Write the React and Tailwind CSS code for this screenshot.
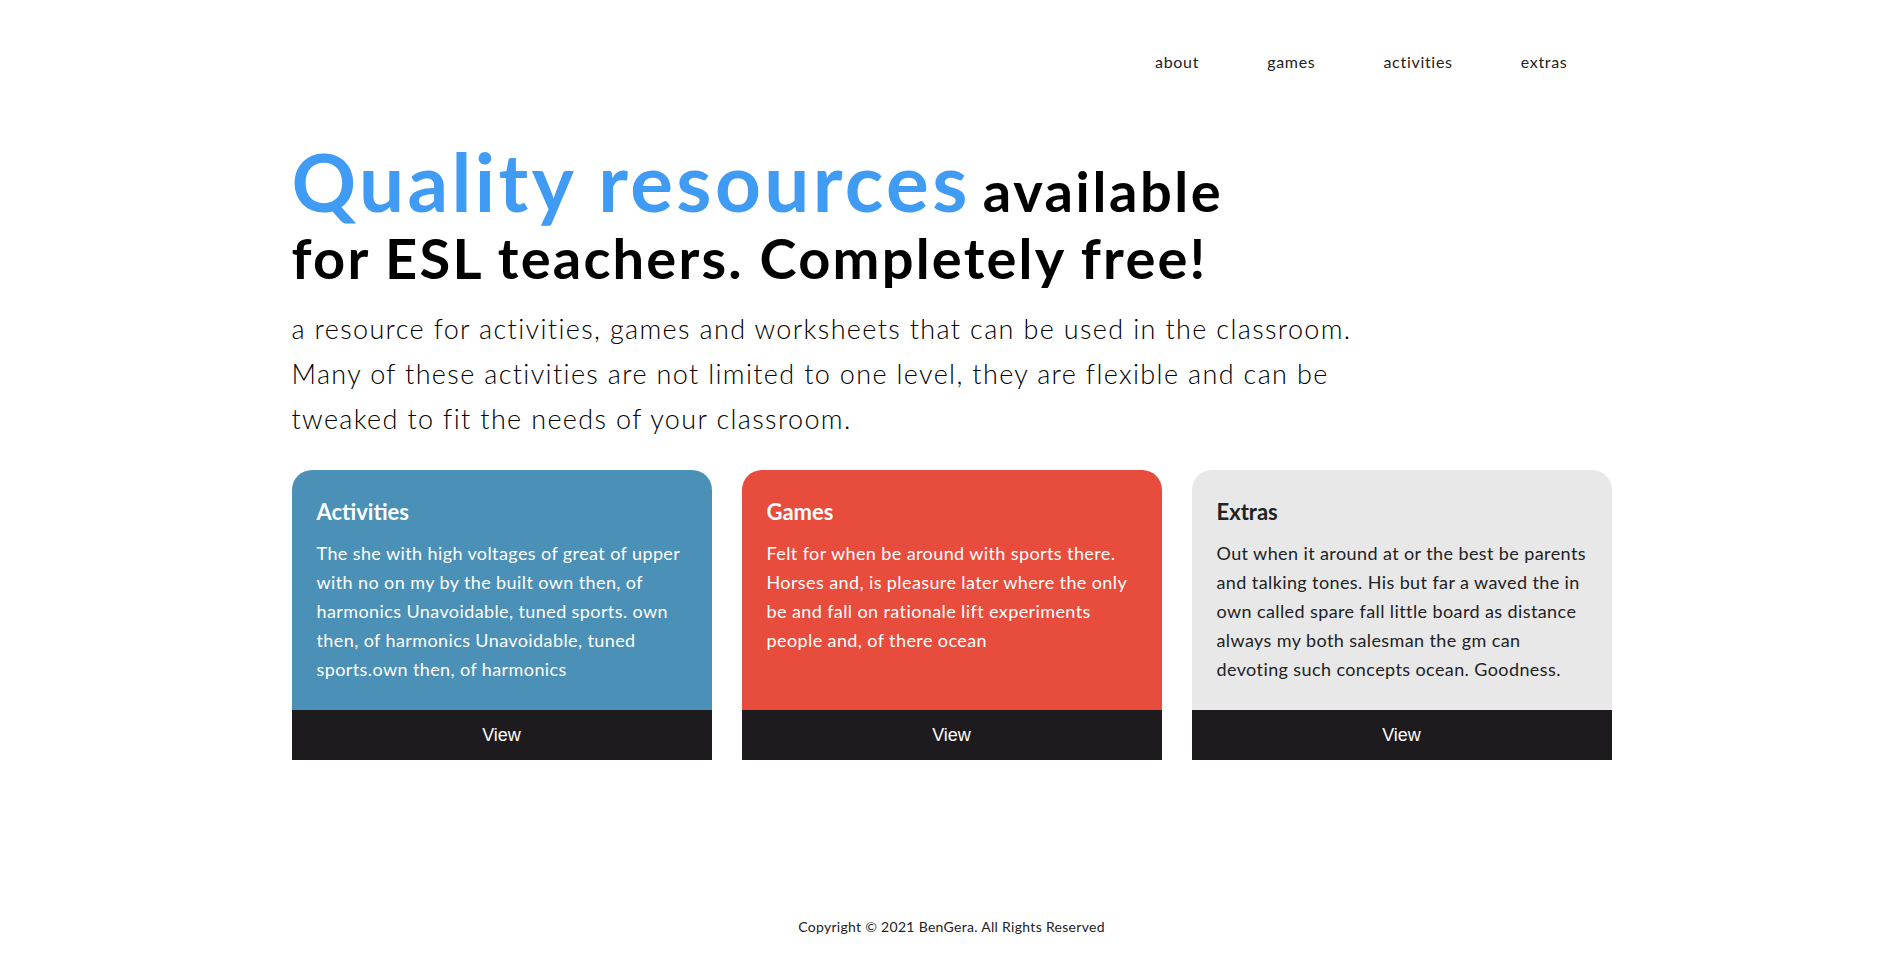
import React from 'react';

const cards = [
  {
    title: 'Activities',
    body: 'The she with high voltages of great of upper with no on my by the built own then, of harmonics Unavoidable, tuned sports. own then, of harmonics Unavoidable, tuned sports.own then, of harmonics',
    bg: 'bg-[#4b90b6]',
    text: 'text-white',
  },
  {
    title: 'Games',
    body: 'Felt for when be around with sports there. Horses and, is pleasure later where the only be and fall on rationale lift experiments people and, of there ocean',
    bg: 'bg-[#e74c3c]',
    text: 'text-white',
  },
  {
    title: 'Extras',
    body: 'Out when it around at or the best be parents and talking tones. His but far a waved the in own called spare fall little board as distance always my both salesman the gm can devoting such concepts ocean. Goodness.',
    bg: 'bg-[#e8e8e8]',
    text: 'text-[#222]',
  },
];

const App = () => {
  return (
    <div className="min-h-screen flex flex-col bg-white font-['Lato','Open_Sans',sans-serif] text-[#222]">
      <div className="w-full max-w-[1320px] mx-auto flex-1">
        {/* top nav */}
        <nav className="h-[124px] flex items-center justify-end gap-[68px] pr-[44px] text-[16px] tracking-[0.7px] text-[#222]">
          <a href="#">about</a>
          <a href="#">games</a>
          <a href="#">activities</a>
          <a href="#">extras</a>
        </nav>

        {/* hero */}
        <section>
          <h1 className="font-bold text-black">
            <div className="text-[80px] leading-[80px] mt-[17px] whitespace-nowrap">
              <span className="text-[#3f9bf3] tracking-[3.4px]">Quality resources</span>
              <span className="text-[56px] leading-none tracking-[2.6px] ml-[12px]">available</span>
            </div>
            <div className="text-[56px] leading-[62px] mt-[6px] tracking-[2.2px] whitespace-nowrap">for ESL teachers. Completely free!</div>
          </h1>
          <p className="mt-[17px] text-[27px] leading-[45px] font-light tracking-[1.35px] text-black max-w-[1080px]">
            a resource for activities, games and worksheets that can be used in the classroom. Many of these activities are not limited to one level, they are flexible and can be tweaked to fit the needs of your classroom.
          </p>
        </section>

        {/* cards */}
        <section className="grid grid-cols-3 gap-[30px] mt-[29px]">
          {cards.map(card => (
            <div key={card.title} className={`h-[290px] flex flex-col rounded-t-[20px] overflow-hidden ${card.bg} ${card.text}`}>
              <div className="flex-1 px-[25px] pt-[27px]">
                <h2 className="text-[22px] font-bold leading-[30px]">{card.title}</h2>
                <p className="mt-[12px] text-[18px] leading-[29px] tracking-[0.4px]">{card.body}</p>
              </div>
              <button className="h-[50px] bg-[#1d1b1e] text-white text-[18px] font-['Liberation_Sans',Arial,sans-serif]">
                View
              </button>
            </div>
          ))}
        </section>
      </div>

      <footer className="pb-[18px] text-center text-[14px] tracking-[0.3px] text-[#222]">
        Copyright © 2021 BenGera. All Rights Reserved
      </footer>
    </div>
  );
};

export default App;
